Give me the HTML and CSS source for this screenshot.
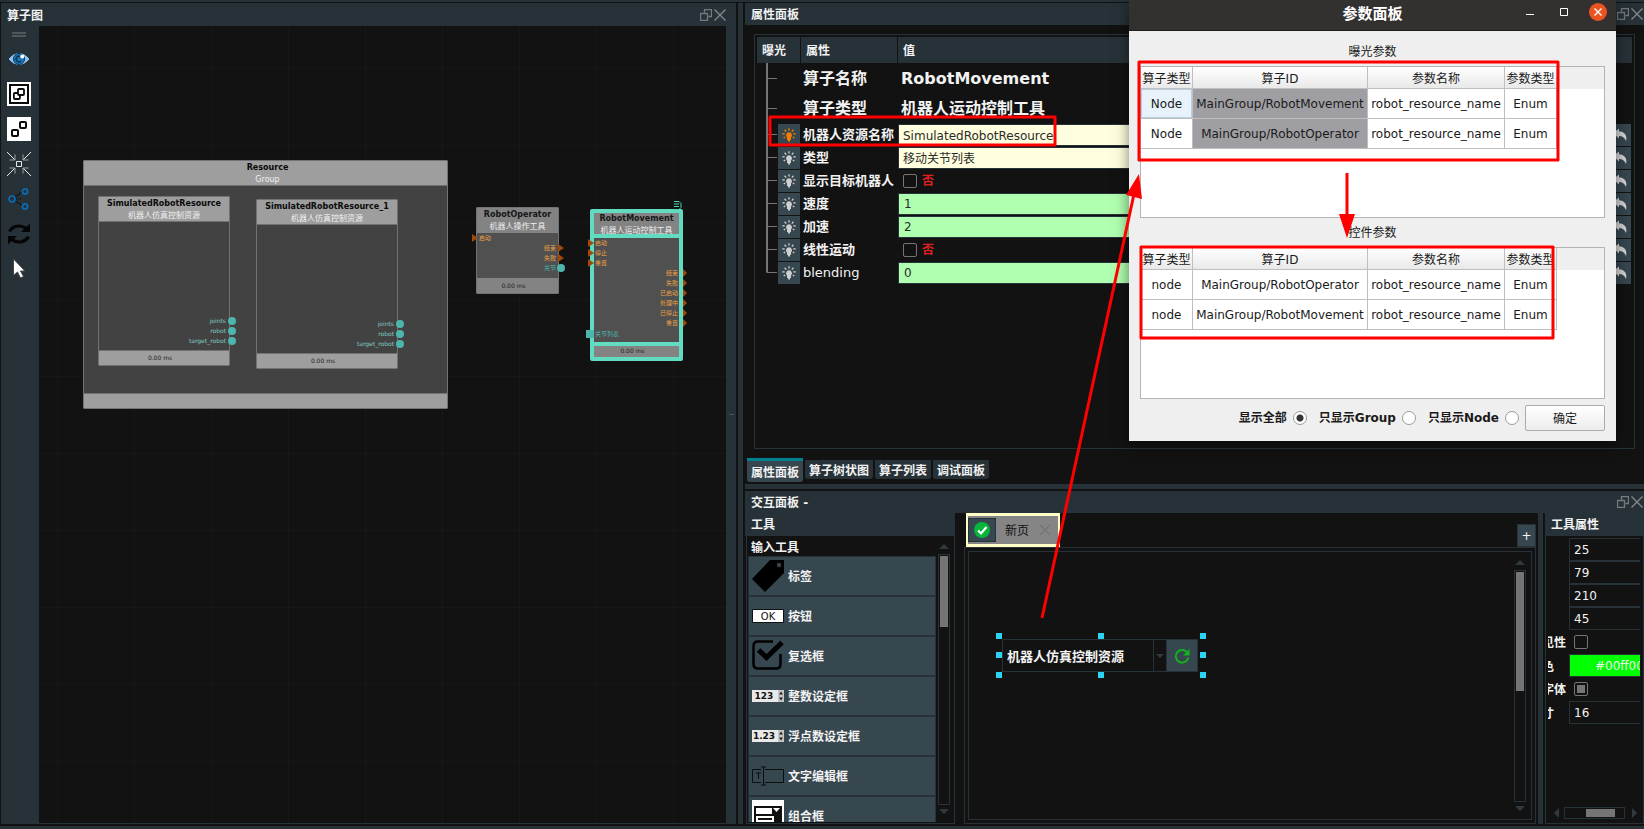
FILE: index.html
```html
<!DOCTYPE html>
<html lang="zh-CN">
<head>
<meta charset="utf-8">
<title>算子图</title>
<link rel="stylesheet" href="styles.css">
</head>
<body>
<svg class="defs" aria-hidden="true">
  <defs>
    <symbol id="i-float" viewBox="0 0 12 12"><path d="M4.500 3.500v-3h7v7h-3M.5 4.500h7v7h-7z" fill="none" stroke="#757b7e" stroke-width="1.300" stroke-linejoin="round"/></symbol>
    <symbol id="i-close" viewBox="0 0 12 12"><path d="M.5 .5l11 11M11.500 .5l-11 11" fill="none" stroke="#858a8d" stroke-width="1.300"/></symbol>
    <symbol id="i-bulb" viewBox="0 0 14 14"><path d="M7 4.300a3 3 0 0 0-2 5.200V12h1v1.500h2V12h1V9.500a3 3 0 0 0-2-5.200z" fill="currentColor"/><path d="M7 .3v2.200M2.600 1.800l1.600 1.800M11.400 1.800L9.800 3.600M.3 5.800h2.400M11.300 5.800h2.400M1.700 10l1.500-1M12.300 10l-1.500-1" stroke="currentColor" stroke-width="1.300" fill="none"/></symbol>
    <symbol id="i-undo" viewBox="0 0 14 14"><path d="M0 5L6 .5v2.800c5 .2 8.500 3.700 7 9.700C11.500 9.500 9.500 8 6 8v2.600z" fill="currentColor"/></symbol>
  </defs>
</svg>
<main class="app">
  <section class="dock graph-dock">
    <header class="dock-title"><h2>算子图</h2><button class="dock-btn" aria-label="浮动"><svg><use href="#i-float"/></svg></button><button class="dock-btn" aria-label="关闭"><svg><use href="#i-close"/></svg></button></header>
    <div class="graph-body">
      <nav class="toolbar">
        <span class="grip"></span>
        <button aria-label="显示"><svg viewBox="0 0 24 24"><path d="M1 12Q6.500 5.500 12 5.500T23 12Q17.500 18.500 12 18.500T1 12z" fill="#8fc1ea" stroke="#1c2b38"/><circle cx="12" cy="12" r="5.500" fill="#1679bd" stroke="#15364f"/><path d="M14 14a2.800 2.800 0 1 1-.5-4.300" fill="none" stroke="#123550" stroke-width="1.500"/><circle cx="15.300" cy="9.500" r="2" fill="#fff"/></svg></button>
        <button aria-label="组合"><svg viewBox="0 0 24 24"><path d="M0 0h24v24H0z" fill="#fff"/><g fill="none" stroke="#0b0b0b"><path d="M3 3h18v18H3z" stroke-width="2"/><rect x="6.900" y="11" width="6" height="6" rx="1" stroke-width="1.800"/><rect x="11" y="7" width="6" height="6" rx="1" stroke-width="1.800" fill="#fff"/></g></svg></button>
        <button aria-label="拆分"><svg viewBox="0 0 24 24"><path d="M0 0h24v24H0z" fill="#fff"/><g fill="none" stroke="#0b0b0b" stroke-width="2"><rect x="5" y="13" width="6" height="6" rx="1"/><rect x="13" y="5" width="6" height="6" rx="1"/></g></svg></button>
        <button aria-label="居中"><svg viewBox="0 0 24 24"><g fill="none" stroke="#e7eaec"><path d="M9.500 9.500h5v5h-5z"/><path d="M0 0l8 8M24 0l-8 8M0 24l8-8M24 24l-8-8"/><path d="M2.500 8H8V2.500M21.500 8H16V2.500M2.500 16H8v5.500M21.500 16H16v5.500" stroke="#9aa1a5"/></g></svg></button>
        <button aria-label="连接"><svg viewBox="0 0 24 24"><g fill="none"><path d="M7.500 10.500l8-6M7.500 13.500l8 5" stroke="#07090a"/><path d="M9 12h6" stroke="#07090a" stroke-dasharray="1 1"/><g stroke="#0b6cb3" stroke-width="1.700"><circle cx="5" cy="12" r="3"/><circle cx="18" cy="4.500" r="2.600"/><circle cx="18" cy="19.500" r="2.600"/></g></g></svg></button>
        <button aria-label="刷新"><svg viewBox="0 0 24 24"><g fill="none" stroke="#050505" stroke-width="3.200"><path d="M2.600 9.500A10 8.500 0 0 1 19 6.500M21.400 14.500A10 8.500 0 0 1 5 17.500"/></g><path d="M23 1.500V10h-9zM1 22.500V14h9z" fill="#050505"/></svg></button>
        <button aria-label="选择"><svg viewBox="0 0 24 24"><path d="M6.500 2v16.500l4-3.500 3 6 3-1.500-3-5.500h4.500z" fill="#fff" stroke="#454545"/></svg></button>
      </nav>
      <div class="canvas">
        <article class="node group">
          <header><strong>Resource</strong><span>Group</span></header>
          <div class="node-body"></div><footer></footer>
        </article>
        <article class="node sim-a">
          <header><strong>SimulatedRobotResource</strong><span>机器人仿真控制资源</span></header>
          <div class="node-body outs data"><p class="dot">joints</p><p class="dot">robot</p><p class="dot">target_robot</p></div>
          <footer>0.00 ms</footer>
        </article>
        <article class="node sim-b">
          <header><strong>SimulatedRobotResource_1</strong><span>机器人仿真控制资源</span></header>
          <div class="node-body outs data"><p class="dot">joints</p><p class="dot">robot</p><p class="dot">target_robot</p></div>
          <footer>0.00 ms</footer>
        </article>
        <article class="node operator">
          <header><strong>RobotOperator</strong><span>机器人操作工具</span></header>
          <div class="node-body ports"><p class="in">启动</p><p class="out">结束</p><p class="out">失败</p><p class="dot data-out">关节</p></div>
          <footer>0.00 ms</footer>
        </article>
        <article class="node movement">
          <svg class="badge" viewBox="0 0 9 9"><path d="M1 .5h5l2 2v4l-2 2H0M1 3h5M1 5.500h5" fill="none" stroke="#4ed1b2"/></svg>
          <header><strong>RobotMovement</strong><span>机器人运动控制工具</span></header>
          <div class="node-body ports"><p class="in">启动</p><p class="in">停止</p><p class="in">重置</p><p class="out">结束</p><p class="out">失败</p><p class="out">已启动</p><p class="out">处理中</p><p class="out">已停止</p><p class="out">重置</p><p class="list-in">关节列表</p></div>
          <footer>0.00 ms</footer>
        </article>
      </div>
    </div>
  </section>
  <div class="splitter-v"></div>
  <div class="right">
    <section class="dock prop-dock">
      <header class="dock-title"><h2>属性面板</h2><button class="dock-btn" aria-label="浮动"><svg><use href="#i-float"/></svg></button><button class="dock-btn" aria-label="关闭"><svg><use href="#i-close"/></svg></button></header>
      <div class="prop-frame">
        <table class="props">
          <colgroup><col class="c-expose"><col class="c-name"><col><col class="c-undo"></colgroup>
          <thead><tr><th>曝光</th><th>属性</th><th colspan="2">值</th></tr></thead>
          <tbody>
            <tr class="big"><td class="tree"></td><th>算子名称</th><td class="text" colspan="2">RobotMovement</td></tr>
            <tr class="big"><td class="tree"></td><th>算子类型</th><td class="text" colspan="2">机器人运动控制工具</td></tr>
            <tr><td class="tree"><button class="bulb on" aria-label="曝光"><svg><use href="#i-bulb"/></svg></button></td><th><label for="p1">机器人资源名称</label></th><td class="field"><select id="p1" class="cream"><option>SimulatedRobotResource</option></select></td><td class="undo"><button aria-label="还原"><svg><use href="#i-undo"/></svg></button></td></tr>
            <tr><td class="tree"><button class="bulb" aria-label="曝光"><svg><use href="#i-bulb"/></svg></button></td><th><label for="p2">类型</label></th><td class="field"><select id="p2" class="cream"><option>移动关节列表</option></select></td><td class="undo"><button aria-label="还原"><svg><use href="#i-undo"/></svg></button></td></tr>
            <tr><td class="tree"><button class="bulb" aria-label="曝光"><svg><use href="#i-bulb"/></svg></button></td><th>显示目标机器人</th><td class="tick"><label><input type="checkbox">否</label></td><td class="undo"><button aria-label="还原"><svg><use href="#i-undo"/></svg></button></td></tr>
            <tr><td class="tree"><button class="bulb" aria-label="曝光"><svg><use href="#i-bulb"/></svg></button></td><th><label for="p4">速度</label></th><td class="field"><input id="p4" class="green" value="1"></td><td class="undo"><button aria-label="还原"><svg><use href="#i-undo"/></svg></button></td></tr>
            <tr><td class="tree"><button class="bulb" aria-label="曝光"><svg><use href="#i-bulb"/></svg></button></td><th><label for="p5">加速</label></th><td class="field"><input id="p5" class="green" value="2"></td><td class="undo"><button aria-label="还原"><svg><use href="#i-undo"/></svg></button></td></tr>
            <tr><td class="tree"><button class="bulb" aria-label="曝光"><svg><use href="#i-bulb"/></svg></button></td><th>线性运动</th><td class="tick"><label><input type="checkbox">否</label></td><td class="undo"><button aria-label="还原"><svg><use href="#i-undo"/></svg></button></td></tr>
            <tr class="last"><td class="tree"><button class="bulb" aria-label="曝光"><svg><use href="#i-bulb"/></svg></button></td><th class="plain"><label for="p7">blending</label></th><td class="field"><input id="p7" class="green" value="0"></td><td class="undo"><button aria-label="还原"><svg><use href="#i-undo"/></svg></button></td></tr>
          </tbody>
        </table>
      </div>
      <nav class="tabs"><button class="active">属性面板</button><button>算子树状图</button><button>算子列表</button><button>调试面板</button></nav>
    </section>
    <div class="splitter-h"></div>
    <section class="dock inter-dock">
      <header class="dock-title"><h2>交互面板 -</h2><button class="dock-btn" aria-label="浮动"><svg><use href="#i-float"/></svg></button><button class="dock-btn" aria-label="关闭"><svg><use href="#i-close"/></svg></button></header>
      <div class="inter-body">
        <section class="tools">
          <h3 class="sub-title">工具</h3>
          <div class="tools-frame">
            <div class="tools-main">
              <h4>输入工具</h4>
              <div class="tool-list">
                <button><svg viewBox="0 0 32 32"><path d="M18 0h14v13L13 32 0 19z" fill="#000"/><circle cx="27" cy="5" r="2.200" fill="#37474f"/></svg><span>标签</span></button>
                <button><svg viewBox="0 0 32 32"><path d="M.5 9.500h31v13H.5z" fill="#fff" stroke="#111"/><text x="16" y="20" class="ok">OK</text></svg><span>按钮</span></button>
                <button><svg viewBox="0 0 32 32"><path d="M21 1.500H6Q1.500 1.500 1.500 6v18q0 4.500 4.500 4.500h18q4.500 0 4.500-4.500V14" fill="none" stroke="#000" stroke-width="2.500"/><path d="M6.500 10l8 7.500L30 2.500" fill="none" stroke="#000" stroke-width="5"/></svg><span>复选框</span></button>
                <button><svg viewBox="0 0 32 32"><path d="M0 10h32v12H0z" fill="#e9e9e9"/><path d="M26 10h6v12h-6z" fill="#c4c4c4"/><path d="M29 11.500l2 3h-4zM29 20.500l2-3h-4z" fill="#222"/><text x="12" y="19" class="num">123</text></svg><span>整数设定框</span></button>
                <button><svg viewBox="0 0 32 32"><path d="M0 10h32v12H0z" fill="#e9e9e9"/><path d="M26 10h6v12h-6z" fill="#c4c4c4"/><path d="M29 11.500l2 3h-4zM29 20.500l2-3h-4z" fill="#222"/><text x="12" y="19" class="num">1.23</text></svg><span>浮点数设定框</span></button>
                <button><svg viewBox="0 0 32 32"><path d="M9 9.500H.5v13H9M13 9.500h18.500v13H13M11.500 7v18M9 7h5M9 25h5M4 13h5M6.500 13v6" fill="none" stroke="#0b0d0e"/></svg><span>文字编辑框</span></button>
                <button><svg viewBox="0 0 32 32"><path d="M0 0h32v32H0z" fill="#fff"/><path d="M2 6h28v26H2z" fill="#111"/><path d="M4 8h16v6H4zM4 16h18v16H4zM21 8h7l-3.500 4z" fill="#fff"/><path d="M6 18h14v2H6z" fill="#111"/></svg><span>组合框</span></button>
              </div>
            </div>
            <div class="vscroll"><i class="up"></i><div class="track"><b class="thumb-a"></b></div><i class="down"></i></div>
          </div>
        </section>
        <section class="pages">
          <div class="page-tabs">
            <div class="page-tab"><span class="state"><svg viewBox="0 0 16 16"><circle cx="8" cy="8" r="8" fill="#07b53b"/><path d="M4 8.500l3 3 5.500-6.500" fill="none" stroke="#fff" stroke-width="2.200"/></svg></span><span class="name">新页</span><svg class="x" viewBox="0 0 12 12"><path d="M1 1l10 10M11 1L1 11" stroke="#747474" stroke-width="1.200"/></svg></div>
            <button class="add" aria-label="新增">+</button>
          </div>
          <div class="page-frame">
            <div class="page">
              <div class="stage">
                <div class="widget">
                  <select aria-label="资源"><option>机器人仿真控制资源</option></select><span class="arrow"></span>
                  <button aria-label="刷新"><svg viewBox="0 0 16 16"><path d="M13.500 5A6.300 6.300 0 1 0 14.300 9.500" fill="none" stroke="#10b51c" stroke-width="1.900"/><path d="M15.500 1v6.500H9z" fill="#10b51c"/></svg></button>
                  <i class="h tl"></i><i class="h tc"></i><i class="h tr"></i><i class="h ml"></i><i class="h mr"></i><i class="h bl"></i><i class="h bc"></i><i class="h br"></i>
                </div>
              </div>
              <div class="vscroll"><i class="up"></i><div class="track"><b class="thumb-b"></b></div><i class="down"></i></div>
            </div>
          </div>
        </section>
        <div class="splitter-v"></div>
        <section class="attrs">
          <h3 class="sub-title">工具属性</h3>
          <div class="attr-frame">
            <div class="attr-rows">
              <div class="attr"><span></span><input aria-label="X" value="25"></div>
              <div class="attr"><span></span><input aria-label="Y" value="79"></div>
              <div class="attr"><span></span><input aria-label="宽" value="210"></div>
              <div class="attr"><span></span><input aria-label="高" value="45"></div>
              <div class="attr tall"><label for="a5">可见性</label><input id="a5" type="checkbox"></div>
              <div class="attr"><span class="lead">颜色</span><button class="color">#00ff00</button></div>
              <div class="attr tall"><label for="a7">粗字体</label><input id="a7" type="checkbox" checked></div>
              <div class="attr"><label class="lead" for="a8">尺寸</label><input id="a8" value="16"></div>
            </div>
            <div class="hscroll"><i class="left"></i><div class="track"><b></b></div><i class="rightward"></i></div>
          </div>
        </section>
      </div>
    </section>
  </div>
</main>

<div class="dialog" role="dialog" aria-labelledby="dlg-title">
  <header class="dlg-bar"><h1 id="dlg-title">参数面板</h1>
    <div class="win-btns"><button aria-label="最小化"><svg viewBox="0 0 18 18"><path d="M5 11.500h8" stroke="#fff"/></svg></button><button aria-label="最大化"><svg viewBox="0 0 18 18"><path d="M5.500 5.500h7v7h-7z" fill="none" stroke="#fff"/></svg></button><button aria-label="关闭"><svg viewBox="0 0 18 18"><circle cx="9" cy="9" r="9" fill="#e95420"/><path d="M5.500 5.500l7 7M12.500 5.500l-7 7" stroke="#fff" stroke-width="1.400"/></svg></button></div>
  </header>
  <div class="dlg-body">
    <h2>曝光参数</h2>
    <div class="grid-box">
      <table class="grid">
        <thead><tr><th>算子类型</th><th>算子ID</th><th>参数名称</th><th>参数类型</th></tr></thead>
        <tbody>
          <tr><td class="focus">Node</td><td class="sel">MainGroup/RobotMovement</td><td>robot_resource_name</td><td>Enum</td></tr>
          <tr><td>Node</td><td class="sel">MainGroup/RobotOperator</td><td>robot_resource_name</td><td>Enum</td></tr>
        </tbody>
      </table>
    </div>
    <h2>控件参数</h2>
    <div class="grid-box">
      <table class="grid">
        <thead><tr><th>算子类型</th><th>算子ID</th><th>参数名称</th><th>参数类型</th></tr></thead>
        <tbody>
          <tr><td>node</td><td>MainGroup/RobotOperator</td><td>robot_resource_name</td><td>Enum</td></tr>
          <tr><td>node</td><td>MainGroup/RobotMovement</td><td>robot_resource_name</td><td>Enum</td></tr>
        </tbody>
      </table>
    </div>
    <div class="dlg-foot"><label>显示全部<input type="radio" name="show" checked></label><label>只显示Group<input type="radio" name="show"></label><label>只显示Node<input type="radio" name="show"></label><button>确定</button></div>
  </div>
</div>

<svg class="marks" viewBox="0 0 1644 829" aria-hidden="true">
  <g fill="none" stroke="#f00" stroke-width="3" stroke-linejoin="round">
    <rect x="770" y="117" width="285" height="28"/>
    <rect x="1139" y="62" width="419" height="98"/>
    <rect x="1141" y="247" width="412" height="91"/>
    <path d="M1042 618L1134 194M1347 173v44"/>
  </g>
  <path d="M1139 174l3 25-16-4zM1339 214h16l-8 24z" fill="#f00"/>
</svg>
</body>
</html>
```

FILE: styles.css
```css
:root {
  --bg: #121212;
  --bar: #273238;
  --btn: #37474f;
  --text: #f2f2f2;
  --sans: "DejaVu Sans", "Noto Sans CJK SC", sans-serif;
}
* { box-sizing: border-box; }
body { margin: 0; background: var(--bg); color: var(--text); font: 12px/16px var(--sans); overflow: hidden; }
h1, h2, h3, h4, p { margin: 0; font-size: 12px; font-weight: bold; }
button, input, select { font: inherit; color: inherit; margin: 0; padding: 0; border: 0; border-radius: 0; background: none; outline: 0; appearance: none; }
svg { display: block; }
.defs { position: absolute; width: 0; height: 0; }

.app { display: flex; height: 100vh; border-top: 2px solid var(--bar); border-bottom: 3px solid var(--bar); padding: 1px 0 2px 1px; }
.dock { display: flex; flex-direction: column; min-height: 0; }
.dock-title { display: flex; align-items: center; flex: none; height: 22px; padding: 0 1px 0 6px; background: var(--bar); }
.dock-title h2 { flex: 1; padding-top: 2px; }
.dock-btn { width: 12px; height: 12px; margin-left: 2px; }
.dock-btn svg { width: 12px; height: 12px; }

.graph-dock { position: relative; flex: 0 0 735px; background: var(--bar); }
.graph-dock::after { content: ""; position: absolute; right: 2px; top: 50%; width: 5px; height: 1px; background: #48545a; }
.graph-dock .dock-title { height: 23px; padding-right: 10px; }
.graph-body { display: flex; flex: 1; min-height: 0; padding-right: 10px; }
.toolbar { display: flex; flex: 0 0 38px; flex-direction: column; align-items: center; gap: 11px; padding: 6px 2px 0 0; }
.toolbar .grip { width: 14px; height: 5px; border: solid #50585c; border-width: 2px 0; margin-bottom: -1px; }
.toolbar svg { width: 24px; height: 24px; }
.canvas { position: relative; flex: 1; overflow: hidden; border-bottom: 1px solid var(--bar); background-color: var(--bg);
  background-image: linear-gradient(90deg, #171717 1px, transparent 1px), linear-gradient(#171717 1px, transparent 1px);
  background-size: 77px 77px; background-position: 18px 0, 0 42px; }

.node { position: absolute; display: flex; flex-direction: column; border: 1px solid #727272; border-radius: 1px; background: #424242; text-align: center; font-size: 6px; line-height: 10px; }
.node header { flex: 0 0 25px; background: #9e9e9e; border-bottom: 1px solid #727272; color: #f0f0f0; font-size: 8px; }
.node strong { display: block; line-height: 13px; }
.node header span { display: block; line-height: 11px; white-space: nowrap; }
.node strong { color: #0a0a0a; }
.node-body { flex: 1; }
.node footer { flex: 0 0 15px; background: #9e9e9e; border-top: 1px solid #727272; color: #222; line-height: 13px; padding-right: 8px; }
.node p { position: relative; font-size: 6px; font-weight: normal; line-height: 10px; }
.outs { display: flex; flex-direction: column; justify-content: flex-end; padding: 0 3px 4px; text-align: right; }
.data { color: #80cbc4; }
.dot::after { content: ""; position: absolute; right: -10px; top: 1px; width: 8px; height: 8px; border-radius: 50%; background: #4db6ac; }
.group { left: 44px; top: 134px; width: 365px; height: 249px; }
.group header { padding-left: 4px; }
.sim-a { left: 59px; top: 170px; width: 132px; height: 170px; }
.sim-b { left: 217px; top: 173px; width: 142px; height: 170px; }
.operator { left: 437px; top: 181px; width: 83px; height: 87px; background: #505050; }
.movement { left: 551px; top: 183px; width: 93px; height: 152px; border: 4px solid #62dcc0; border-radius: 2px; background: #505050; }
.operator header, .operator footer, .movement header, .movement footer { background: #838383; border-color: #838383; }
.operator header strong, .movement header strong { color: #161616; }
.movement header { border-bottom: 4px solid #62dcc0; overflow: hidden; }
.movement header strong { line-height: 12px; }
.movement footer { border-top: 4px solid #62dcc0; line-height: 10px; }
.ports { padding: 0 2px; color: #e9a143; }
.movement .ports { padding: 0 1px; }
.in, .list-in { text-align: left; }
.out, .data-out { text-align: right; }
.in::before, .out::after { content: ""; position: absolute; top: 1px; border: 4px solid transparent; border-left: 6px solid #a1480b; border-right: 0; }
.in::before { left: -7px; }
.out::after { right: -8px; }
.movement .out::after { right: -9px; border-left-width: 4px; }
.data-out, .list-in { color: #4db6ac; }
.dot.data-out::after { right: -9px; }
.node .list-in { margin-top: 1px; }
.list-in::before { content: ""; position: absolute; left: -9px; top: 1px; width: 8px; height: 8px; background: #4db6ac; }
.badge { position: absolute; right: -3px; top: -12px; width: 9px; height: 9px; }

.splitter-v { flex: 0 0 9px; border: solid var(--bg); border-width: 0 2px; background: var(--bar); }
.right { display: flex; flex: 1; flex-direction: column; min-width: 0; }
.prop-dock { flex: 0 0 481px; }
.prop-frame { flex: 1; margin: 9px 9px 9px 9px; padding: 2px; border: 1px solid var(--bar); }
.props { width: 100%; border-collapse: separate; border-spacing: 0; table-layout: fixed; }
.props th, .props td { padding: 0; height: 23px; text-align: left; }
.props thead th { height: 26px; padding: 2px 0 0 5px; background: var(--bar); border-right: 1px solid var(--bg); }
.props thead th:last-child { border-right: 0; }
.props .c-expose { width: 44px; }
.props .c-name { width: 97px; }
.props .c-undo { width: 23px; }
.props tbody th { padding-left: 2px; font-size: 13px; white-space: nowrap; }
.props tbody th.plain { font-weight: normal; }
.props .big th, .props .big td { height: 30px; padding-top: 2px; font-size: 16px; }
.props .text { padding-left: 3px; font-weight: bold; }
.tree { background: linear-gradient(#757575, #757575) 9px 0 / 2px 100% no-repeat, linear-gradient(#757575, #757575) 10px 50% / 10px 1px no-repeat; }
.props .tree { padding-left: 21px; }
.props .last .tree { background-size: 2px 50%, 10px 1px; }
.bulb { display: grid; place-items: center; width: 22px; height: 22px; background: var(--btn); color: #cfcfcf; }
.bulb svg { width: 14px; height: 14px; }
.bulb.on { color: #f57c00; }
.field input, .field select { display: block; width: 100%; height: 22px; padding: 0 0 0 5px; border: 1px solid var(--bar); color: #2a2a2a; }
.field select { padding: 2px 0 0 4px; }
.cream { background: #ffffe0; }
.green { background: #b0ffb0; }
.tick label { display: flex; align-items: center; gap: 5px; padding-left: 5px; color: #e02020; font-weight: bold; }
input[type=checkbox] { width: 14px; height: 14px; border: 1px solid #757575; border-radius: 2px; }
input[type=checkbox]:checked { background: #757575 content-box; padding: 2px; }
.undo button { display: grid; place-items: center; width: 22px; height: 22px; background: var(--btn); color: #d4d4d4; }
.undo svg { width: 14px; height: 14px; }
.tabs { display: flex; flex: 0 0 26px; gap: 2px; padding: 2px 0 0 2px; align-items: flex-start; }
.tabs button { height: 19px; padding: 2px 4px 0; background: var(--bar); border-radius: 0 0 3px 3px; font-weight: bold; }
.tabs .active { height: 24px; margin-top: -2px; border-top: 3px solid #00838f; background: var(--btn); }
.splitter-h { flex: 0 0 7px; background: var(--bar); border-bottom: 2px solid var(--bg); }

.inter-dock { flex: 1; }
.inter-body { display: flex; flex: 1; min-height: 0; }
.sub-title { flex: none; height: 23px; padding: 4px 0 0 6px; background: var(--bar); }
.tools { display: flex; flex: 0 0 210px; flex-direction: column; margin-right: 9px; }
.tools-frame { display: flex; flex: 1; min-height: 0; padding: 0 4px 1px 1px; border: 1px solid var(--bar); border-top: 0; gap: 2px; margin-left: 1px; }
.tools-main { flex: 1; min-width: 0; overflow: hidden; }
.tools h4 { height: 20px; padding: 4px 0 0 3px; }
.tool-list button { display: flex; align-items: center; gap: 4px; width: 100%; height: 40px; padding-left: 3px; border: 1px solid var(--bar); background: var(--btn); font-weight: bold; }
.tool-list span { padding-top: 2px; }
.tool-list svg { width: 32px; height: 32px; }
.ok { font: 10px "DejaVu Sans", sans-serif; text-anchor: middle; fill: #111; }
.num { font: bold 9px "DejaVu Sans", sans-serif; text-anchor: middle; fill: #111; }
.vscroll { display: flex; flex: 0 0 12px; flex-direction: column; align-items: center; padding: 8px 0; }
.vscroll .up, .vscroll .down { border: 5px solid transparent; }
.vscroll .up { border-top: 0; border-bottom-color: #2e3a40; margin-bottom: 5px; }
.vscroll .down { border-bottom: 0; border-top-color: #2e3a40; margin-top: 4px; }
.track { flex: 1; width: 12px; border: 1px solid var(--bar); padding: 1px; }
.track b { display: block; background: #757575; }
.thumb-a { height: 71px; }
.thumb-b { height: 119px; }

.pages { display: flex; flex: 1; flex-direction: column; min-width: 0; }
.page-tabs { display: flex; align-items: flex-end; justify-content: space-between; flex: 0 0 34px; padding-left: 2px; }
.page-tab { display: flex; align-items: center; width: 94px; height: 34px; padding: 0 7px 0 0; border: solid #ffffc8; border-width: 3px 2px; background: #858585; color: #111; }
.state { display: grid; place-items: center; width: 28px; height: 24px; border: 1px solid #26323a; background: var(--btn); }
.state svg { width: 16px; height: 16px; }
.page-tab .name { flex: 1; padding: 2px 0 0 9px; }
.page-tab .x { width: 12px; height: 12px; }
.add { width: 19px; height: 23px; background: var(--btn); border: 1px solid var(--bar); }
.page-frame { display: flex; flex: 1; min-height: 0; padding: 3px; border: 1px solid var(--bar); }
.page { display: flex; flex: 1; min-width: 0; padding-right: 5px; border: 1px solid var(--bar); }
.stage { position: relative; flex: 1; }
.widget { position: absolute; left: 33px; top: 87px; display: flex; width: 198px; height: 33px; padding-right: 2px; }
.widget select { flex: 1; min-width: 0; padding: 2px 0 0 4px; border: 1px solid var(--bar); font-size: 13px; font-weight: bold; }
.widget .arrow { display: grid; place-items: center; width: 12px; border: solid var(--bar); border-width: 1px 0; }
.widget .arrow::after { content: ""; border: 4px solid transparent; border-top-color: #2e3a40; border-bottom: 0; }
.widget button { display: grid; place-items: center; width: 32px; background: var(--btn); border: 1px solid var(--bar); }
.widget svg { width: 16px; height: 16px; }
.h { position: absolute; width: 6px; height: 6px; background: #2bd4f2; }
.tl, .ml, .bl { left: -6px; }
.tc, .bc { left: 96px; }
.tr, .mr, .br { right: -6px; }
.tl, .tc, .tr { top: -6px; }
.ml, .mr { top: 13px; }
.bl, .bc, .br { bottom: -6px; }

.attrs { display: flex; flex: 0 0 99px; flex-direction: column; min-width: 0; }
.attr-frame { display: flex; flex: 1; flex-direction: column; justify-content: space-between; min-width: 0; min-height: 0; padding: 2px 3px 4px 2px; border: 1px solid var(--bar); border-top: 0; }
.attr-rows { overflow: hidden; }
.attr { display: flex; height: 23px; justify-content: flex-end; align-items: center; font-weight: bold; }
.attr.tall { height: 24px; justify-content: flex-start; }
.attr > span:first-child, .attr > label:first-child { display: flex; flex: 0 0 21px; justify-content: flex-end; overflow: hidden; padding: 2px 3px 0 0; white-space: nowrap; }
.attr > .lead:first-child { padding-right: 15px; }
.attr input:not([type=checkbox]) { flex: 1; min-width: 0; width: 0; height: 23px; padding-left: 4px; border: 1px solid var(--bar); border-right: 0; font-weight: normal; }
.attr input[type=checkbox] { margin-left: 5px; }
.color { flex: 1; min-width: 0; height: 23px; overflow: hidden; padding-left: 25px; border: 1px solid var(--bar); border-right: 0; background: #0f0; font-weight: normal; text-align: left; white-space: nowrap; }
.attr .color { font-weight: normal; }
.hscroll { display: flex; align-items: center; height: 12px; padding: 0 3px 0 6px; }
.hscroll i { border: 5px solid transparent; }
.hscroll .left { border-left: 0; border-right-color: #2e3a40; margin-right: 5px; }
.hscroll .rightward { border-right: 0; border-left-color: #2e3a40; margin-left: 7px; }
.hscroll .track { height: 12px; padding: 1px 9px 1px 21px; }
.hscroll b { height: 8px; }

.dialog { position: absolute; top: 0; right: 28px; width: 487px; background: #efefef; color: #1a1a1a; box-shadow: 0 2px 14px rgba(0, 0, 0, .5); }
.dlg-bar { display: grid; place-items: center; height: 31px; padding-bottom: 3px; background: #333030; border-bottom: 1px solid #1f1d1d; color: #fff; }
.dlg-bar h1 { font-size: 15px; line-height: 20px; }
.win-btns { position: absolute; top: 3px; right: 9px; display: flex; gap: 16px; }
.win-btns svg { width: 18px; height: 18px; }
.dlg-body { padding: 10px 11px; }
.dlg-body h2 { height: 25px; line-height: 23px; font-weight: normal; text-align: center; }
.grid-box { height: 152px; background: linear-gradient(#efefef, #efefef) 0 0 / 100% 22px no-repeat, #fff; border: 1px solid #b4b4b4; }
.grid-box + h2 { margin-top: 4px; }
.grid { width: 416px; border-collapse: separate; border-spacing: 0; table-layout: fixed; }
.grid th, .grid td { padding: 0; height: 30px; border-right: 1px solid #bfbfbf; border-bottom: 1px solid #bfbfbf; text-align: center; font-weight: normal; white-space: nowrap; }
.grid th { height: 22px; padding-top: 2px; background: linear-gradient(#fff, #e9e9e9); }
.grid th:nth-child(1) { width: 52px; }
.grid th:nth-child(2) { width: 175px; }
.grid th:nth-child(3) { width: 137px; }
.grid .sel { background: #9f9ea3; }
.grid .focus { background: #e8f2fa; box-shadow: inset 0 0 0 1px #b8cfe0; }
.dlg-foot { display: flex; align-items: center; justify-content: flex-end; gap: 12px; margin-top: 6px; font-weight: bold; }
.dlg-foot label { display: flex; align-items: center; gap: 6px; }
.dlg-foot label:nth-child(3) { margin-right: -6px; }
input[type=radio] { width: 14px; height: 14px; border: 1px solid #9b9b9b; border-radius: 50%; background: #fff; }
input[type=radio]:checked { background: radial-gradient(#333 3px, #fff 4px); }
.dlg-foot button { width: 80px; height: 26px; padding-top: 1px; border: 1px solid #ababab; border-radius: 2px; background: linear-gradient(#fff, #ececec); font-weight: normal; }

.marks { position: absolute; left: 0; top: 0; width: 1644px; height: 829px; pointer-events: none; }
```
